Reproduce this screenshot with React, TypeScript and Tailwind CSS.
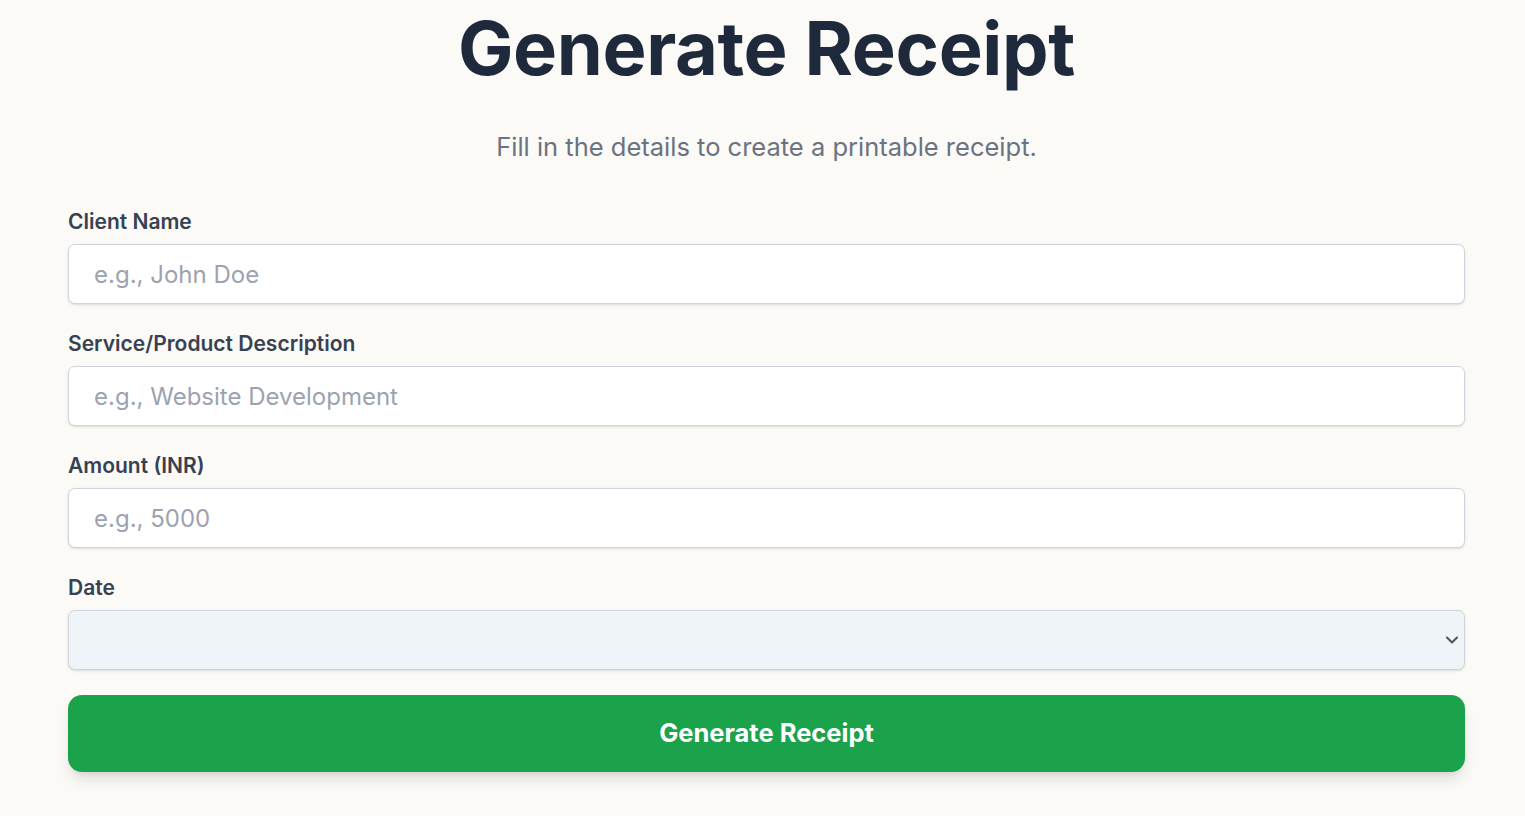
import React from "react";

const Field = ({ label, placeholder }: { label: string; placeholder: string }) => (
  <div className="flex flex-col">
    <label className="text-[21px] font-semibold text-[#374151] leading-none mb-[12px]">{label}</label>
    <input
      placeholder={placeholder}
      className="h-[60px] w-full rounded-[7px] border border-[#d1d5db] bg-white px-[25px] text-[24px] text-[#1f2937] placeholder:text-[#9ca3af] shadow-sm outline-none"
    />
  </div>
);

export default function App() {
  return (
    <div
      className="min-h-[816px] w-full bg-[#fbfaf7] pl-[68px] pr-[60px]"
      style={{ fontFamily: "Inter, 'Noto Sans', sans-serif" }}
    >
      <h1 className="pt-[6px] text-center text-[74px] font-bold leading-[84px] tracking-[-0.005em] text-[#1e293b]">
        Generate Receipt
      </h1>
      <p className="mt-[41px] text-center text-[25.5px] leading-[32px] text-[#6b7280]">
        Fill in the details to create a printable receipt.
      </p>
      <div className="mt-[48px] flex flex-col gap-[29px]">
        <Field label="Client Name" placeholder="e.g., John Doe" />
        <Field label="Service/Product Description" placeholder="e.g., Website Development" />
        <Field label="Amount (INR)" placeholder="e.g., 5000" />
        <div className="flex flex-col">
          <label className="text-[21px] font-semibold text-[#374151] leading-none mb-[12px]">Date</label>
          <div className="flex h-[60px] w-full items-center justify-end rounded-[7px] border border-[#d1d5db] bg-[#eff4f9] pr-[2px] shadow-sm">
            <svg width="20" height="20" viewBox="0 0 24 24" fill="none" stroke="#4b5563" strokeWidth="2.5" strokeLinecap="round" strokeLinejoin="round">
              <path d="M6 9l6 6 6-6" />
            </svg>
          </div>
        </div>
      </div>
      <button className="mt-[25px] h-[77px] w-full rounded-[14px] bg-[#1aa34a] text-[25.5px] font-bold text-white shadow-[0_10px_15px_-3px_rgba(0,0,0,0.12),0_4px_6px_-4px_rgba(0,0,0,0.1)]">
        Generate Receipt
      </button>
    </div>
  );
}
